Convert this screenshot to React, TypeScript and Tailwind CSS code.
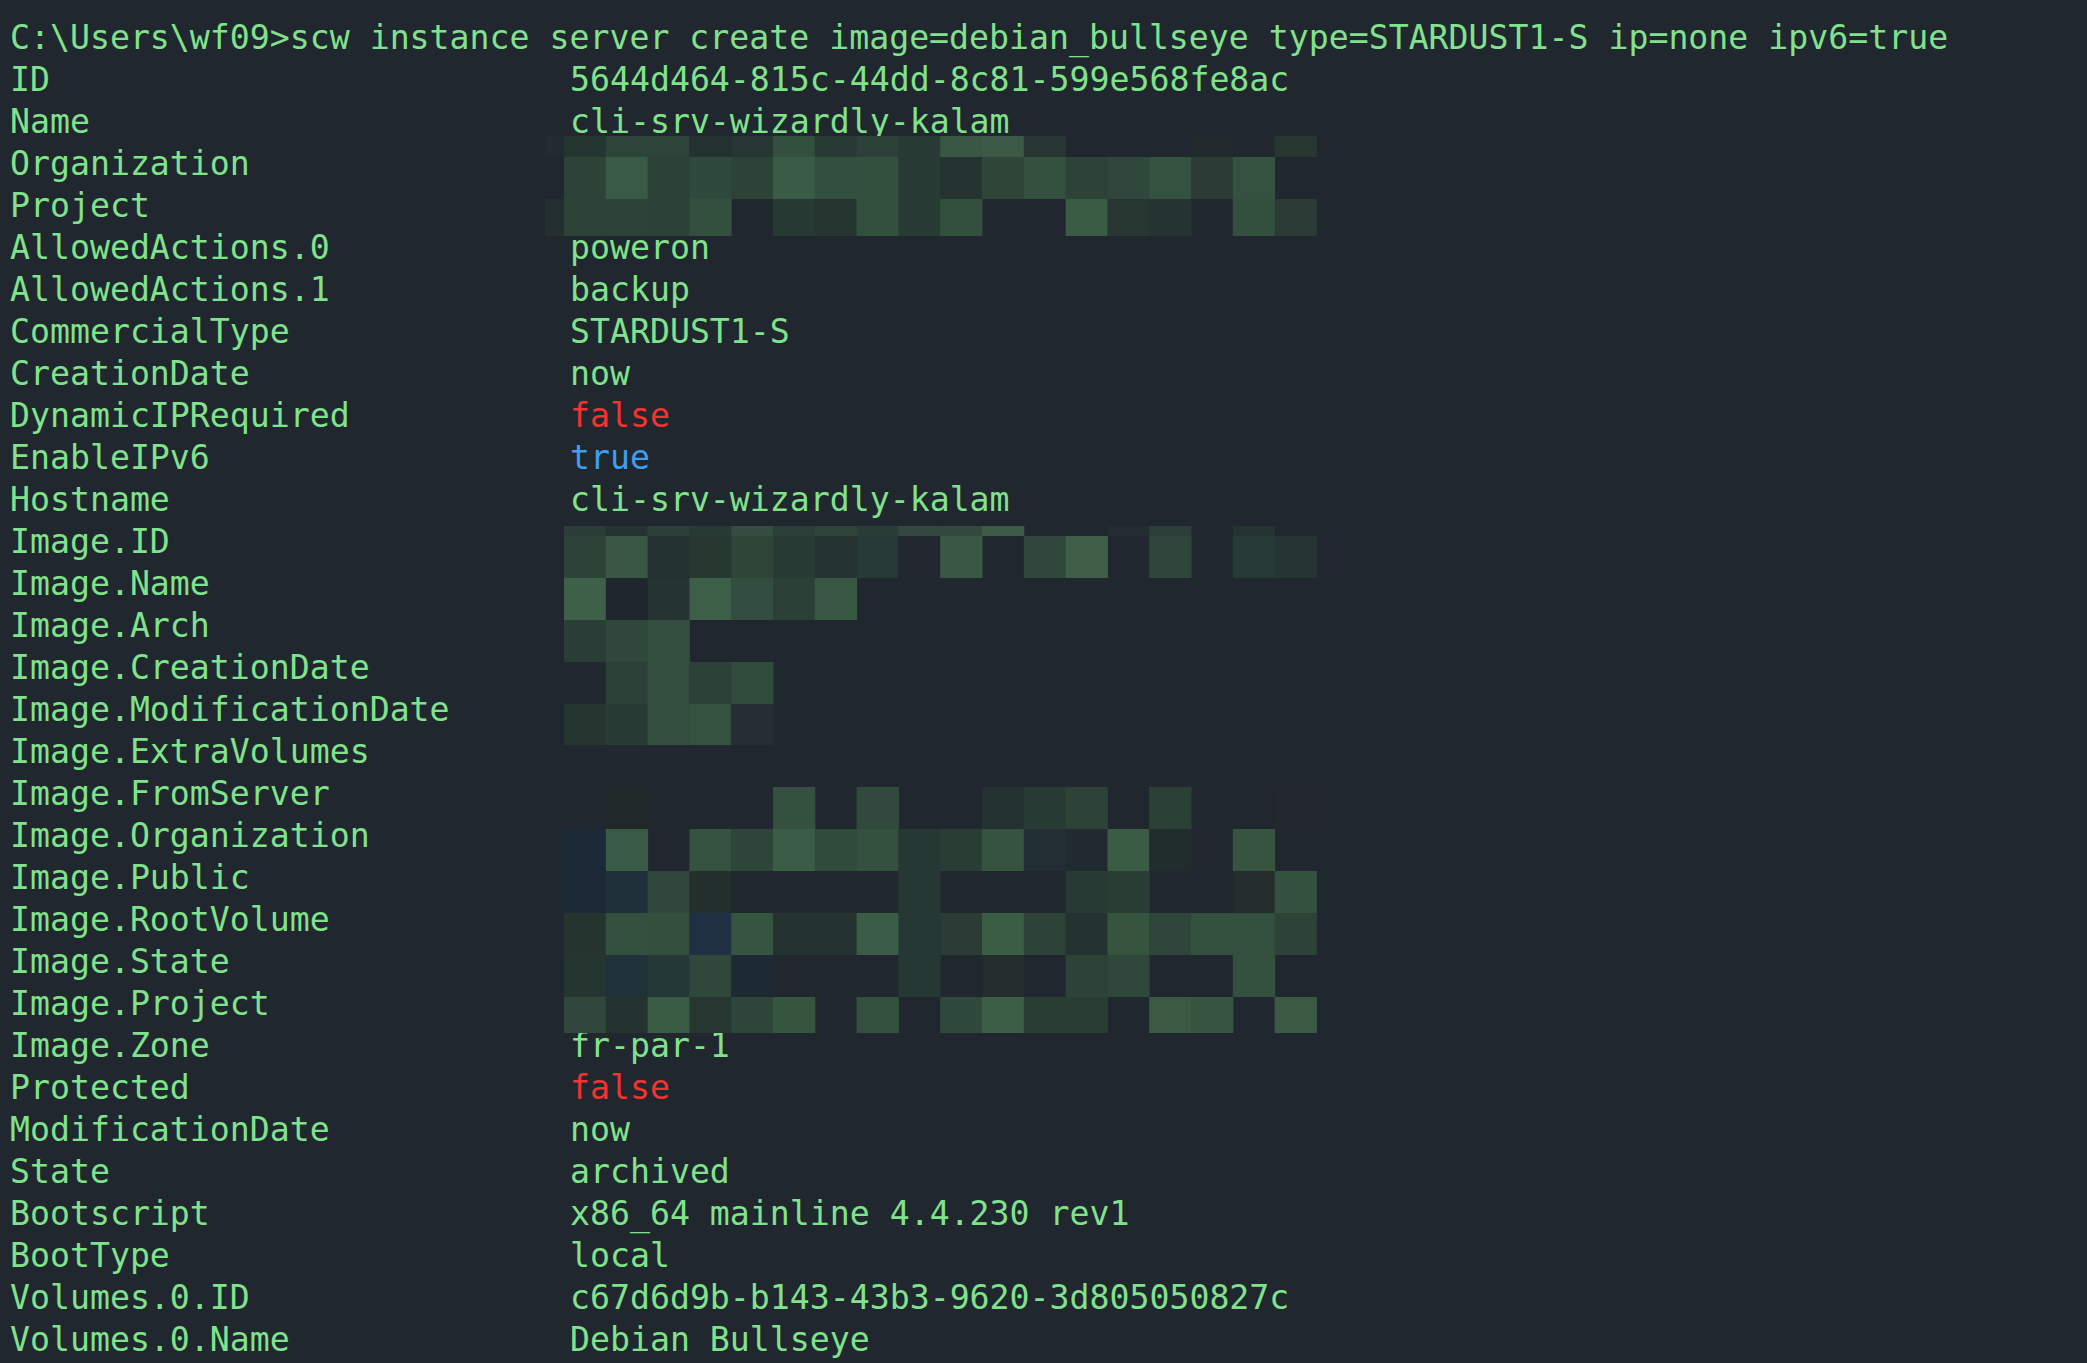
const rows: [string, string, string?][] = [
  ["ID", "5644d464-815c-44dd-8c81-599e568fe8ac"],
  ["Name", "cli-srv-wizardly-kalam"],
  ["Organization", ""],
  ["Project", ""],
  ["AllowedActions.0", "poweron"],
  ["AllowedActions.1", "backup"],
  ["CommercialType", "STARDUST1-S"],
  ["CreationDate", "now"],
  ["DynamicIPRequired", "false", "red"],
  ["EnableIPv6", "true", "blue"],
  ["Hostname", "cli-srv-wizardly-kalam"],
  ["Image.ID", ""],
  ["Image.Name", ""],
  ["Image.Arch", ""],
  ["Image.CreationDate", ""],
  ["Image.ModificationDate", ""],
  ["Image.ExtraVolumes", ""],
  ["Image.FromServer", ""],
  ["Image.Organization", ""],
  ["Image.Public", ""],
  ["Image.RootVolume", ""],
  ["Image.State", ""],
  ["Image.Project", ""],
  ["Image.Zone", "fr-par-1"],
  ["Protected", "false", "red"],
  ["ModificationDate", "now"],
  ["State", "archived"],
  ["Bootscript", "x86_64 mainline 4.4.230 rev1"],
  ["BootType", "local"],
  ["Volumes.0.ID", "c67d6d9b-b143-43b3-9620-3d805050827c"],
  ["Volumes.0.Name", "Debian Bullseye"],
];

// pixelated redaction blocks: [top, height, edgeColor, 18 cells]
const _ = "";
type MosaicRow = [number, number, string, string[]];
const mosaic: MosaicRow[] = [
  [136, 21, "#222b30", ["#253530", "#2d4538", "#2d4538", "#233230", "#263632", "#33503f", "#283a34", "#2c4137", "#283b35", "#385843", "#3a5a46", "#273632", _, _, _, "#212b2d", _, "#273631"]],
  [157, 42, _, ["#2d4337", "#395a46", "#2c4137", "#2f4a3c", "#2e4337", "#3a5c47", "#31503f", "#33503f", "#283b35", "#253430", "#2e4538", "#34503f", "#2d4338", "#30483b", "#33523f", "#2a3c35", "#34523f", _]],
  [199, 37, "#243030", ["#2d4337", "#2d4337", "#2c4137", "#33503f", _, "#263a33", "#253530", "#33503f", "#283b35", "#33503f", _, _, "#3a5c45", "#273630", "#243430", _, "#33503f", "#2a3c35"]],

  [526, 10, _, ["#2b3d37", "#253332", "#2c3f38", "#283a34", "#344d40", "#2b3e37", "#2f453a", "#2a3c36", "#33493e", "#33493e", "#3d5c47", _, _, "#222c31", "#2c3e38", _, "#253432", _]],
  [536, 42, _, ["#2d4337", "#385845", "#233230", "#263830", "#2e4538", "#283b35", "#253433", "#283a37", "#22282f", "#385843", _, "#30483b", "#3f5f48", _, "#2f463a", _, "#283a35", "#263533"]],
  [578, 42, _, ["#3f6048", "#1f262c", "#253432", "#3d5f47", "#334e40", "#2b4037", "#385843", _, _, _, _, _, _, _, _, _, _, _]],
  [620, 42, _, ["#2a3d36", "#2f483b", "#344f40", _, _, _, _, _, _, _, _, _, _, _, _, _, _, _]],
  [662, 42, _, ["#222830", "#2c4137", "#344f40", "#2c4137", "#314b3d", _, _, _, _, _, _, _, _, _, _, _, _, _]],
  [704, 41, _, ["#253530", "#283b35", "#344e40", "#34523f", "#262d33", _, _, _, _, _, _, _, _, _, _, _, _, _]],
  [745, 42, "#222830", ["#21272f", "#21282f", "#21282f", "#21282f", _, _, _, _, _, _, _, _, "#21282e", "#21282e", "#21282e", _, _, _]],
  [787, 42, _, [_, "#1f2a28", _, _, _, "#34503f", _, "#324a3d", _, _, "#233230", "#293b35", "#2d4338", _, "#2c4136", _, _, "#23272e"]],
  [829, 42, _, ["#1c2a38", "#395a44", _, "#34523f", "#2e4539", "#3b5d47", "#304a3c", "#34503f", "#263833", "#2a3d35", "#35533f", "#232f33", "#212a30", "#3a5c44", "#212d2c", _, "#36543f", _]],
  [871, 42, _, ["#1c2a38", "#1f3038", "#30483b", "#222f2c", _, _, _, _, "#263833", _, _, _, "#283c35", "#293d35", _, _, "#222d2c", "#34503f"]],
  [913, 42, _, ["#263430", "#34503f", "#34503d", "#1f3043", "#365541", "#253330", "#253330", "#3b5c47", "#263833", "#2a3c35", "#3c5d45", "#2e4338", "#243230", "#36553f", "#2f463a", "#34503f", "#34503f", "#2e4338"]],
  [955, 42, _, ["#253530", "#1f3139", "#243838", "#30483b", "#1e2a33", _, _, _, "#263833", _, "#222d2c", _, "#2d4338", "#30483b", _, _, "#34503f", _]],
  [997, 36, _, ["#30483b", "#243230", "#3a5c45", "#263630", "#2e4539", "#36553f", _, "#34503f", _, "#2f4a3c", "#3c5e46", "#2a3d35", "#2a3d35", _, "#3a5a44", "#36543f", _, "#3a5a44"]],
];

const CELL = 41.8;
const X0 = 564;

function Redactions() {
  return (
    <svg
      className="absolute left-0 top-0 pointer-events-none"
      width={2087}
      height={1363}
      viewBox="0 0 2087 1363"
    >
      {mosaic.map(([top, h, edge, cells], r) => (
        <g key={r}>
          {edge && <rect x={545} y={top} width={X0 - 545} height={h} fill={edge} />}
          {cells.map((c, i) =>
            c ? (
              <rect key={i} x={X0 + i * CELL} y={top} width={CELL + 0.5} height={h} fill={c} />
            ) : null
          )}
        </g>
      ))}
    </svg>
  );
}

export default function App() {
  return (
    <div className="relative min-h-screen w-full overflow-hidden bg-[#20272f] pt-[17px] pl-[10px] text-[#80e38b] text-[33.2px] leading-[42px] whitespace-pre font-['DejaVu_Sans_Mono',monospace]">
      <div>C:\Users\wf09&gt;scw instance server create image=debian_bullseye type=STARDUST1-S ip=none ipv6=true</div>
      {rows.map(([k, v, tone]) => (
        <div key={k} className="flex">
          <span className="w-[560px] shrink-0">{k}</span>
          <span
            className={
              tone === "red" ? "text-[#f2332f]" : tone === "blue" ? "text-[#3e9ef0]" : ""
            }
          >
            {v}
          </span>
        </div>
      ))}
      <Redactions />
    </div>
  );
}
